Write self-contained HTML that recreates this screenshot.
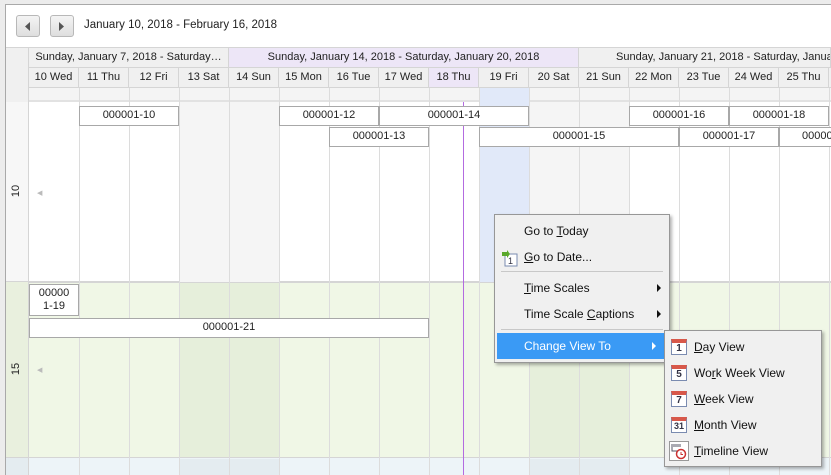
<!DOCTYPE html>
<html><head><style>
*{box-sizing:border-box;margin:0;padding:0}
html,body{width:831px;height:475px;overflow:hidden}
body{background:#ececec;font-family:"Liberation Sans",sans-serif;font-size:11px;color:#222;position:relative}
.a{position:absolute}
.frame{left:5px;top:4px;width:826px;height:471px;background:#fff;border-left:1px solid #a9a9a9;border-top:1px solid #a9a9a9}
.btn{top:15px;width:24px;height:22px;border:1px solid #b8b8b8;border-radius:3px;background:linear-gradient(#f4f4f4,#dedede)}
.btn svg{position:absolute;left:8px;top:6px}
.hdr{background:#f0f0f0;border-right:1px solid #d5d5d5;border-bottom:1px solid #d5d5d5;text-align:center;line-height:19px;white-space:nowrap;overflow:hidden}
.ev{background:#fff;border:1px solid #a8a8a8;text-align:center;line-height:17px;height:20px;white-space:nowrap;overflow:hidden}
.vl{width:1px;background:#dcdcdc}
.mi{position:absolute;left:0;right:0;height:26px;line-height:26px;padding-left:29px;font-size:12px;color:#111;white-space:nowrap}
.mi u{text-decoration:underline}
.arr{position:absolute;right:8px;top:9px;width:0;height:0;border-top:4px solid transparent;border-bottom:4px solid transparent;border-left:4px solid #111}
.ic{position:absolute;left:6px;top:5px;width:16px;height:16px;border:1px solid #7a8bb0;background:#fff;border-top:4px solid #d8584a;font-size:10px;line-height:11px;text-align:center;color:#334;font-weight:bold}
</style></head><body>
<div class="a frame"></div>
<div class="a btn" style="left:16px"><svg width="6" height="9"><path d="M5 0L0 4.5L5 9Z" fill="#555"/></svg></div>
<div class="a btn" style="left:50px"><svg width="6" height="9"><path d="M0 0L5 4.5L0 9Z" fill="#555"/></svg></div>
<div class="a" style="left:84px;top:19px;font-size:11.5px">January 10, 2018 - February 16, 2018</div>

<div class="a" style="left:6px;top:47px;width:23px;height:55px;background:#f0f0f0;border-right:1px solid #d5d5d5;border-top:1px solid #d5d5d5"></div>
<div class="a" style="left:6px;top:102px;width:23px;height:180px;background:#f7f7f7;border-right:1px solid #d5d5d5;border-bottom:1px solid #d5d5d5"></div>
<div class="a" style="left:6px;top:282px;width:23px;height:176px;background:#e9f0de;border-right:1px solid #d5d5d5;border-bottom:1px solid #d5d5d5"></div>
<div class="a" style="left:6px;top:458px;width:23px;height:20px;background:#e4ecf0;border-right:1px solid #d5d5d5"></div>
<div class="a" style="left:10px;top:185px;transform:rotate(-90deg);font-size:11px">10</div>
<div class="a" style="left:10px;top:363px;transform:rotate(-90deg);font-size:11px">15</div>

<div class="a" style="left:29px;top:47px;width:802px;height:1px;background:#d5d5d5"></div>
<div class="a hdr" style="left:29px;top:48px;width:200px;height:20px">Sunday, January 7, 2018 - Saturday…</div>
<div class="a hdr" style="left:229px;top:48px;width:350px;height:20px;background:#ede6f7">Sunday, January 14, 2018 - Saturday, January 20, 2018</div>
<div class="a hdr" style="left:579px;top:48px;width:252px;height:20px;text-align:left;padding-left:37px">Sunday, January 21, 2018 - Saturday, January 27, 2018</div>
<div class="a hdr" style="left:29px;top:68px;width:50px;height:20px">10 Wed</div>
<div class="a hdr" style="left:79px;top:68px;width:50px;height:20px">11 Thu</div>
<div class="a hdr" style="left:129px;top:68px;width:50px;height:20px">12 Fri</div>
<div class="a hdr" style="left:179px;top:68px;width:50px;height:20px">13 Sat</div>
<div class="a hdr" style="left:229px;top:68px;width:50px;height:20px">14 Sun</div>
<div class="a hdr" style="left:279px;top:68px;width:50px;height:20px">15 Mon</div>
<div class="a hdr" style="left:329px;top:68px;width:50px;height:20px">16 Tue</div>
<div class="a hdr" style="left:379px;top:68px;width:50px;height:20px">17 Wed</div>
<div class="a hdr" style="left:429px;top:68px;width:50px;height:20px;background:#ede6f7">18 Thu</div>
<div class="a hdr" style="left:479px;top:68px;width:50px;height:20px">19 Fri</div>
<div class="a hdr" style="left:529px;top:68px;width:50px;height:20px">20 Sat</div>
<div class="a hdr" style="left:579px;top:68px;width:50px;height:20px">21 Sun</div>
<div class="a hdr" style="left:629px;top:68px;width:50px;height:20px">22 Mon</div>
<div class="a hdr" style="left:679px;top:68px;width:50px;height:20px">23 Tue</div>
<div class="a hdr" style="left:729px;top:68px;width:50px;height:20px">24 Wed</div>
<div class="a hdr" style="left:779px;top:68px;width:50px;height:20px">25 Thu</div>
<div class="a hdr" style="left:829px;top:68px;width:10px;height:20px"></div>
<div class="a" style="left:29px;top:88px;width:802px;height:14px;background:#f4f4f4;border-bottom:2px solid #e2e2e2"></div>

<div class="a" style="left:29px;top:102px;width:802px;height:180px;background:#fff;border-bottom:1px solid #d5d5d5"></div>
<div class="a" style="left:179px;top:102px;width:100px;height:180px;background:#f5f5f5"></div>
<div class="a" style="left:529px;top:102px;width:100px;height:180px;background:#f5f5f5"></div>
<div class="a" style="left:479px;top:88px;width:50px;height:194px;background:#e1e9f9"></div>
<div class="a" style="left:29px;top:282px;width:802px;height:176px;background:#f0f7e6;border-top:1px solid #d5d5d5;border-bottom:1px solid #d5d5d5"></div>
<div class="a" style="left:179px;top:283px;width:100px;height:174px;background:#e6efdb"></div>
<div class="a" style="left:529px;top:283px;width:100px;height:174px;background:#e6efdb"></div>
<div class="a" style="left:29px;top:458px;width:802px;height:17px;background:#edf4f8"></div>
<div class="a" style="left:179px;top:459px;width:100px;height:16px;background:#e4ecf0"></div>
<div class="a" style="left:529px;top:459px;width:100px;height:16px;background:#e4ecf0"></div>
<div class="a vl" style="left:79px;top:88px;height:387px"></div>
<div class="a vl" style="left:129px;top:88px;height:387px"></div>
<div class="a vl" style="left:179px;top:88px;height:387px"></div>
<div class="a vl" style="left:229px;top:88px;height:387px"></div>
<div class="a vl" style="left:279px;top:88px;height:387px"></div>
<div class="a vl" style="left:329px;top:88px;height:387px"></div>
<div class="a vl" style="left:379px;top:88px;height:387px"></div>
<div class="a vl" style="left:429px;top:88px;height:387px"></div>
<div class="a vl" style="left:479px;top:88px;height:387px"></div>
<div class="a vl" style="left:529px;top:88px;height:387px"></div>
<div class="a vl" style="left:579px;top:88px;height:387px"></div>
<div class="a vl" style="left:629px;top:88px;height:387px"></div>
<div class="a vl" style="left:679px;top:88px;height:387px"></div>
<div class="a vl" style="left:729px;top:88px;height:387px"></div>
<div class="a vl" style="left:779px;top:88px;height:387px"></div>
<div class="a vl" style="left:829px;top:88px;height:387px"></div>
<div class="a" style="left:463px;top:102px;width:1px;height:373px;background:#b36be0"></div>
<div class="a" style="left:37px;top:189px;font-size:7px;color:#bbb">◀</div>
<div class="a" style="left:37px;top:366px;font-size:7px;color:#bbb">◀</div>

<div class="a ev" style="left:79px;top:106px;width:100px">000001-10</div>
<div class="a ev" style="left:279px;top:106px;width:100px">000001-12</div>
<div class="a ev" style="left:379px;top:106px;width:150px">000001-14</div>
<div class="a ev" style="left:629px;top:106px;width:100px">000001-16</div>
<div class="a ev" style="left:729px;top:106px;width:100px">000001-18</div>
<div class="a ev" style="left:329px;top:127px;width:100px">000001-13</div>
<div class="a ev" style="left:479px;top:127px;width:200px">000001-15</div>
<div class="a ev" style="left:679px;top:127px;width:100px">000001-17</div>
<div class="a ev" style="left:779px;top:127px;width:60px;text-align:left;padding-left:22px">000001-19</div>
<div class="a ev" style="left:29px;top:284px;width:50px;height:32px;line-height:13px;padding-top:2px">00000<br>1-19</div>
<div class="a ev" style="left:29px;top:318px;width:400px">000001-21</div>

<div class="a" style="left:494px;top:214px;width:176px;height:149px;background:#f0f0f0;border:1px solid #979797;box-shadow:2px 2px 3px rgba(0,0,0,.3)">
 <div class="mi" style="top:3px">Go to <u>T</u>oday</div>
 <div class="mi" style="top:29px"><u>G</u>o to Date...
  <svg class="a" style="left:6px;top:5px" width="18" height="18"><rect x="4" y="5" width="12" height="12" fill="#fff" stroke="#7a8bb0"/><text x="7" y="15" font-size="9" font-family="Liberation Sans" fill="#334">1</text><path d="M1 3h5v-2l3 4-3 4v-2H1z" fill="#5aa82c"/></svg></div>
 <div class="a" style="left:6px;top:56px;width:162px;height:1px;background:#c8c8c8"></div>
 <div class="mi" style="top:60px"><u>T</u>ime Scales<span class="arr"></span></div>
 <div class="mi" style="top:86px">Time Scale <u>C</u>aptions<span class="arr"></span></div>
 <div class="a" style="left:6px;top:114px;width:162px;height:1px;background:#c8c8c8"></div>
 <div class="mi" style="top:118px;left:2px;right:5px;background:#3a9af5;color:#fff;padding-left:27px">Change View To<span class="arr" style="border-left-color:#fff"></span></div>
</div>
<div class="a" style="left:664px;top:330px;width:158px;height:137px;background:#f0f0f0;border:1px solid #979797;box-shadow:2px 2px 3px rgba(0,0,0,.3)">
 <div class="mi" style="top:3px"><span class="ic">1</span><u>D</u>ay View</div>
 <div class="mi" style="top:29px"><span class="ic">5</span>Wo<u>r</u>k Week View</div>
 <div class="mi" style="top:55px"><span class="ic">7</span><u>W</u>eek View</div>
 <div class="mi" style="top:81px"><span class="ic" style="font-size:9px">31</span><u>M</u>onth View</div>
 <div class="mi" style="top:107px"><svg class="a" style="left:4px;top:3px" width="20" height="20"><rect x="0.5" y="0.5" width="19" height="19" fill="#fff" stroke="#999"/><path d="M3 3v7h6M5 3v3M7 3v3M9 3v3M11 3v3" stroke="#556" fill="none"/><circle cx="12" cy="13" r="4.5" fill="#fff" stroke="#c33" stroke-width="1.5"/><path d="M12 11v2.5h2" stroke="#c33" fill="none"/></svg><u>T</u>imeline View</div>
</div>
</body></html>
